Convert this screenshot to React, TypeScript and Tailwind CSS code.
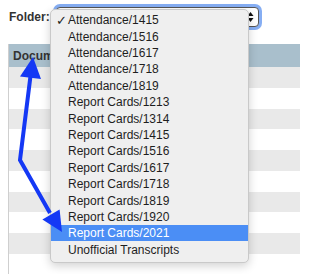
const folders = [
  "Attendance/1415",
  "Attendance/1516",
  "Attendance/1617",
  "Attendance/1718",
  "Attendance/1819",
  "Report Cards/1213",
  "Report Cards/1314",
  "Report Cards/1415",
  "Report Cards/1516",
  "Report Cards/1617",
  "Report Cards/1718",
  "Report Cards/1819",
  "Report Cards/1920",
  "Report Cards/2021",
  "Unofficial Transcripts",
];

const selected = "Attendance/1415";
const highlighted = "Report Cards/2021";

export default function App() {
  return (
    <div className="relative w-[300px] h-[274px] overflow-hidden bg-white font-['Liberation_Sans',Arial,sans-serif]">
      <div className="flex items-center pl-[9px] pt-[7px]">
        <span className="text-[12px] font-bold text-[#333]">Folder:</span>
        <div className="ml-[6px] flex h-[20px] w-[203px] items-center justify-end rounded-[4px] border border-[#555] bg-white pr-[4px] ring-[3px] ring-[#86aef3]">
          <svg width="7" height="12" viewBox="0 0 7 12">
            <path d="M3.5 1 L6.5 5 L0.5 5 Z" fill="#111" />
            <path d="M3.5 11 L6.5 7 L0.5 7 Z" fill="#111" />
          </svg>
        </div>
      </div>

      <div className="ml-[8px] mt-[17px] border-l border-[#cfcfcf]">
        <div className="flex h-[23px] items-center bg-[#a9bfcc] pl-[4px] text-[12px] font-bold text-[#333]">
          Documents
        </div>
        {Array.from({ length: 10 }).map((_, i) => (
          <div
            key={i}
            className={i % 2 === 0 ? "h-[20.75px] bg-[#e9e9e9]" : "h-[20.75px] bg-white"}
          />
        ))}
      </div>

      <div className="absolute left-[50px] top-[9px] w-[199px] rounded-[5px] border border-[#c9c9c9] bg-[#efefef] pt-[2px] pb-[4px] shadow-[0_3px_10px_rgba(0,0,0,0.18)]">
        {folders.map((f) => (
          <div
            key={f}
            className={
              f === highlighted
                ? "relative flex h-[16.4px] items-center bg-[#4b8ef5] pl-[17px] text-[12px] text-white"
                : "relative flex h-[16.4px] items-center pl-[17px] text-[12px] text-[#1e1e1e]"
            }
          >
            {f === selected && (
              <span className="absolute left-[5px] top-[-1px] text-[13px] font-['DejaVu_Sans',sans-serif]">✓</span>
            )}
            {f}
          </div>
        ))}
      </div>

      <svg className="pointer-events-none absolute inset-0" width="300" height="274" viewBox="0 0 300 274">
        <polyline
          points="30.5,76 20,160 50,213"
          fill="none"
          stroke="#1438f5"
          strokeWidth="4"
          strokeLinejoin="miter"
        />
        <polygon points="33,57 20,76.5 41,79" fill="#1438f5" />
        <polygon points="62,232 42.4,219.5 59.6,209.5" fill="#1438f5" />
      </svg>
    </div>
  );
}
